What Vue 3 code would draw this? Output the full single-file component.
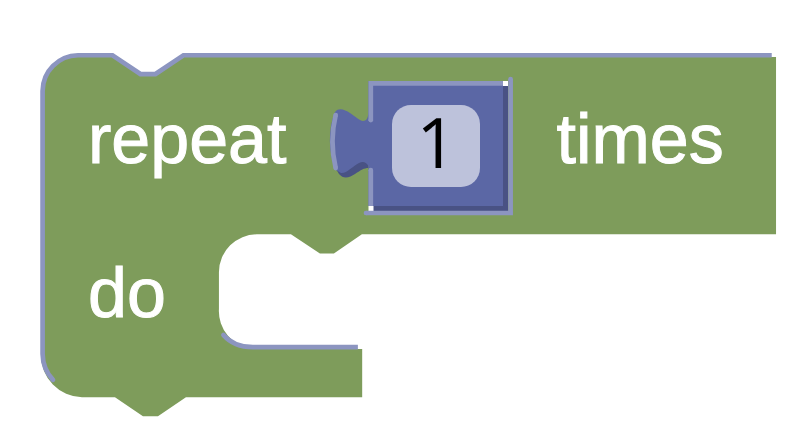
<script setup>
import { ref } from 'vue'

const times = ref('1')
</script>

<template>
  <main class="workspace">
    <form class="block" @submit.prevent>
      <svg class="shape" viewBox="40 53 737 363" aria-hidden="true">
        <path
          class="body"
          d="M41 92A37 37 0 0 1 78 56H112L140 75H156L184 57H776.3V234.3H362L334 253.5H320L291 234.3H257A38 38 0 0 0 219 272V309A38 38 0 0 0 253 349H362.3V397.3H186L158 416.3H143L115 397.3H82A42 42 0 0 1 41 355Z"
        />
        <path class="edge" d="M53 380A39 39 0 0 1 42.6 354V91A36 36 0 0 1 78 55.2H112.5L140.5 74H155.5L183.5 55.2H772" />
        <path class="cap" d="M53 380l-.1 -.1M223.5 335l.1 .1" />
        <path class="edge" d="M223.5 335Q234 347.2 253 347.2H358" />
      </svg>

      <div class="row">
        <label class="text" for="repeat-count">repeat</label>
        <div class="value">
          <svg class="shape" viewBox="331 77 180 138" aria-hidden="true">
            <path
              class="shade"
              d="M373 86H508V211H373ZM336 169L339 174C344 180 350 177 355 174C361 170 364 168 368.5 168V158L345 160Z"
            />
            <path
              class="value-body"
              d="M368.5 81H503V206H368.5V166C366 162 363 161 359 163C353 166 346 174 341 173L336 170C328 154 328 128 335 112C339 107 345 110 350 113C356 117 360 121 363 121C367 121 368.5 117 368.5 111Z"
            />
            <path class="corner" d="M503 81H508V86H503ZM368.5 206H373.5V211H368.5Z" />
            <path class="edge" d="M370.8 121V83.4H503M370.8 170V206M335.7 115Q329.2 141.5 335.7 168" />
            <path class="cap" d="M370.8 120v.1M370.8 170v.1M335.7 115v.1M335.7 168v.1" />
            <path class="edge" d="M366 213H510.6V79" />
            <path class="cap" d="M366 213h.1M510.6 79v.1" />
          </svg>
          <input id="repeat-count" v-model="times" class="field" type="text" inputmode="numeric" />
        </div>
        <span class="text">times</span>
      </div>

      <div class="row row-do">
        <span class="text">do</span>
      </div>
    </form>
  </main>
</template>

<style>
body {
  background: #fff;
}
</style>

<style scoped>
.workspace {
  display: flex;
  padding: 53px 30px 30px 40px;
}

.block {
  position: relative;
  flex: none;
  padding: 24px 53px 83px 48px;
  color: #fff;
  font-family: "Liberation Sans", Arial, sans-serif;
  font-size: 70px;
  line-height: 80px;
}

.shape {
  position: absolute;
  inset: 0;
  width: 100%;
  height: 100%;
  overflow: visible;
}

.row {
  position: relative;
  display: flex;
  align-items: flex-start;
  gap: 45px;
}

.row-do {
  padding-top: 16px;
}

.text {
  padding-top: 22px;
  -webkit-text-stroke: 1px #fff;
}

.value {
  position: relative;
  display: flex;
  padding: 28px 31px 28px 61px;
}

.field {
  position: relative;
  box-sizing: border-box;
  width: 88px;
  height: 82px;
  margin: 0;
  padding: 0 0 10px;
  border: 0;
  border-radius: 19px;
  outline: 0;
  background: #bdc2db;
  color: #000;
  font-family: "Open Sans", Arial, sans-serif;
  font-size: 70px;
  text-align: center;
}

.body {
  fill: #7e9c5b;
}

.value-body {
  fill: #5b67a5;
}

.shade {
  fill: #495284;
}

.corner {
  fill: #fff;
}

.edge,
.cap {
  fill: none;
  stroke: #8c95c0;
  stroke-width: 4.7;
}

.cap {
  stroke-linecap: round;
}
</style>
